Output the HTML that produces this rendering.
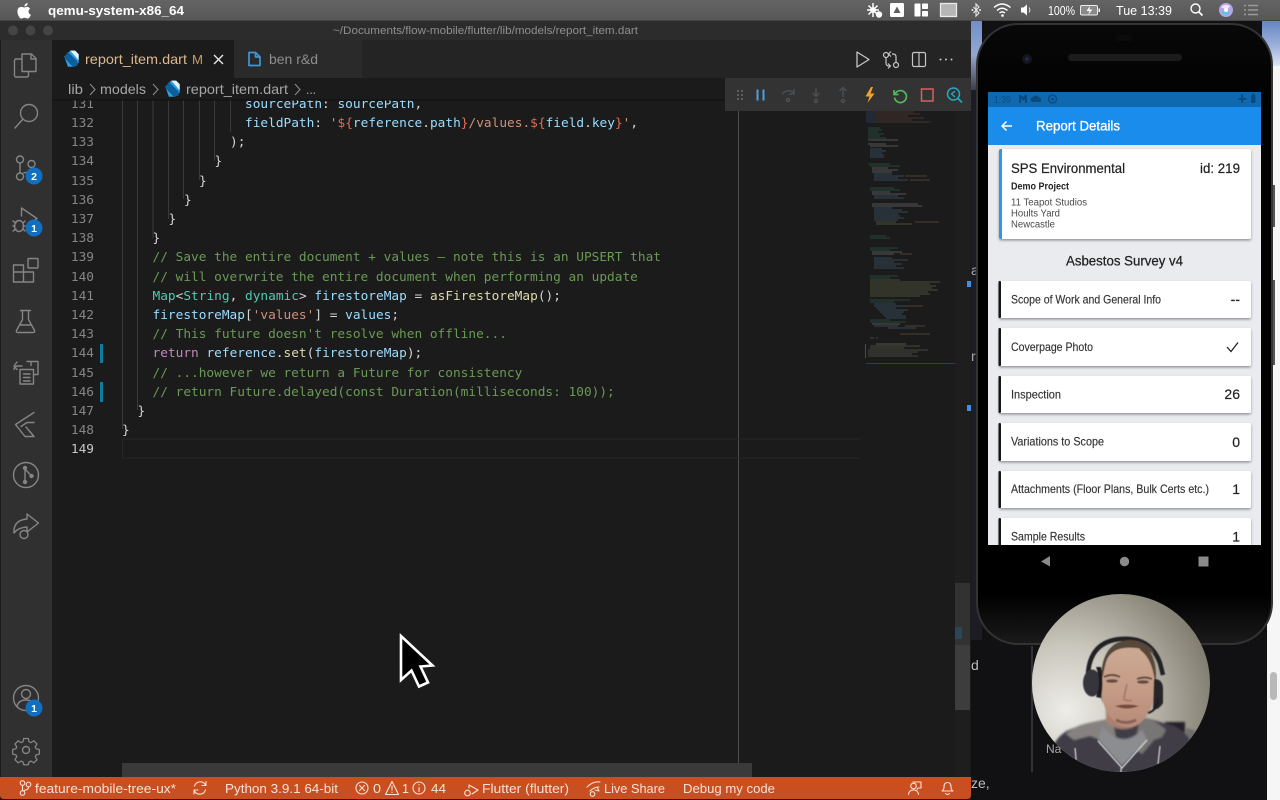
<!DOCTYPE html>
<html lang="en">
<head>
<meta charset="utf-8">
<title>report_item.dart</title>
<style>
html,body{margin:0;padding:0;width:1280px;height:800px;overflow:hidden;background:#111}
svg{display:block;filter:blur(.3px)}
text{font-family:"Liberation Sans",sans-serif;white-space:pre}
.c text,text.c{font-family:"DejaVu Sans Mono","Liberation Mono",monospace;font-size:12.8px}
.n{fill:#858585;text-anchor:end;font-family:"DejaVu Sans Mono","Liberation Mono",monospace;font-size:12.8px}
.p{fill:#d4d4d4}.v{fill:#9cdcfe}.f{fill:#dcdcaa}.s{fill:#ce9178}.t{fill:#4ec9b0}.k{fill:#c586c0}.g{fill:#6a9955}
.ic{fill:none;stroke:#858585;stroke-width:1.4;stroke-linecap:round;stroke-linejoin:round}
.st{fill:#f4e3da;font-size:13px}
.si{fill:none;stroke:#f4e3da;stroke-width:1.1;stroke-linejoin:round;stroke-linecap:round}
.it{fill:#333;font-size:11.6px;stroke:#333;stroke-width:.15}
.val{fill:#222;font-size:14px;text-anchor:end;stroke:#222;stroke-width:.2}
</style>
</head>
<body>
<svg width="1280" height="800" viewBox="0 0 1280 800" xmlns="http://www.w3.org/2000/svg">
<defs>
<linearGradient id="menu" x1="0" y1="0" x2="0" y2="1"><stop offset="0" stop-color="#646464"/><stop offset="1" stop-color="#565656"/></linearGradient>
<linearGradient id="bluel" x1="0" y1="0" x2="0" y2="1"><stop offset="0" stop-color="#6f8fc9"/><stop offset=".5" stop-color="#93a8d0"/><stop offset="1" stop-color="#3a3d4c"/></linearGradient>
<linearGradient id="bluer" x1="0" y1="0" x2="0" y2="1"><stop offset="0" stop-color="#6484c0"/><stop offset=".55" stop-color="#a0b5de"/><stop offset="1" stop-color="#eef1f8"/></linearGradient>
<linearGradient id="phone" x1="0" y1="0" x2="0" y2="1"><stop offset="0" stop-color="#080808"/><stop offset=".15" stop-color="#000"/><stop offset=".92" stop-color="#000"/><stop offset="1" stop-color="#1a1a1a"/></linearGradient>
<radialGradient id="wall" cx=".2" cy=".65" r=".9"><stop offset="0" stop-color="#eeede8"/><stop offset=".4" stop-color="#c9c6bc"/><stop offset="1" stop-color="#767164"/></radialGradient>
<linearGradient id="skin" x1="0" y1="0" x2="0" y2="1"><stop offset="0" stop-color="#cdaa94"/><stop offset=".6" stop-color="#c49a84"/><stop offset="1" stop-color="#b58a78"/></linearGradient>
<clipPath id="cam"><circle cx="1121" cy="683" r="89"/></clipPath>
<clipPath id="screen"><rect x="988" y="92" width="273" height="453"/></clipPath>
<clipPath id="ed"><rect x="52" y="100" width="810" height="677"/></clipPath>
<filter id="sh" x="-10%" y="-20%" width="120%" height="150%"><feDropShadow dx="0" dy="1.5" stdDeviation="1.4" flood-color="#000" flood-opacity=".38"/></filter>
<filter id="soft"><feGaussianBlur stdDeviation="1"/></filter>
<filter id="soft2"><feGaussianBlur stdDeviation=".6"/></filter>
<g id="dart" transform="scale(1.2)"><path d="M-6 -2 L-1 -7 L3 -7 L6 -4 L6 3 L2 6.500 L-3 6.500 Z" fill="#2f9fe0"/><path d="M-3 -6 L5 2 L5 5.500 L1 6.500 L-6 -1 Z" fill="#0d5f9c"/><path d="M-1 -7 L3 -7 L6 -4 L6 1 Z" fill="#e8f2fa"/></g>
</defs>

<!-- backdrop -->
<rect width="1280" height="800" fill="#111113"/>
<rect x="970" y="20" width="12" height="70" fill="url(#bluel)"/>
<rect x="970" y="90" width="12" height="550" fill="#1c1c24"/>
<rect x="1262" y="20" width="18" height="50" fill="url(#bluer)"/>
<rect x="1267" y="66" width="13" height="734" fill="#f6f6f6"/>
<rect x="1270" y="672" width="7" height="28" rx="3.500" fill="#b9b9b9"/>
<text x="971" y="275" fill="#a8a8a8" font-size="14">a</text>
<text x="971" y="361" fill="#a8a8a8" font-size="14">r</text>
<text x="971" y="670" fill="#bdbdbd" font-size="14">d</text>
<text x="971" y="788" fill="#bdbdbd" font-size="14">ze,</text>
<line x1="1032" y1="646" x2="1032" y2="772" stroke="#555" stroke-width="1"/>
<text x="1046" y="753" fill="#a9a9a9" font-size="12">Na</text>

<!-- VS Code window -->
<rect x="0" y="21" width="971" height="779" fill="#1b1b1c"/>
<rect x="0" y="21" width="971" height="19" fill="#2c2c2c"/>
<circle cx="13" cy="30.500" r="5" fill="#454545"/><circle cx="30.500" cy="30.500" r="5" fill="#454545"/><circle cx="48" cy="30.500" r="5" fill="#454545"/>
<text x="333" y="34" fill="#8f8f8f" font-size="11" textLength="305" lengthAdjust="spacingAndGlyphs">~/Documents/flow-mobile/flutter/lib/models/report_item.dart</text>

<!-- activity bar -->
<rect x="1" y="40" width="51" height="737" fill="#303030"/>
<!-- tabs -->
<rect x="52" y="40" width="919" height="38" fill="#242425"/>
<rect x="52" y="40" width="182" height="38" fill="#1b1b1c"/>
<rect x="234" y="40" width="128" height="38" fill="#2a2a2b"/>
<use href="#dart" x="71.500" y="59"/>
<text x="85" y="64" fill="#dcb98c" font-size="14" textLength="102" lengthAdjust="spacingAndGlyphs">report_item.dart</text>
<text x="192" y="64" fill="#c79c63" font-size="13" textLength="11" lengthAdjust="spacingAndGlyphs">M</text>
<path d="M214 55 L223 64 M223 55 L214 64" stroke="#e6e6e6" stroke-width="1.400" fill="none"/>
<path d="M249 52.500 h6.500 l4.500 4.500 v8.500 h-11 z M255.500 52.500 v4.500 h4.500" fill="none" stroke="#3f97d6" stroke-width="1.700" stroke-linejoin="round"/>
<text x="269" y="64" fill="#8e8e8e" font-size="14" textLength="49" lengthAdjust="spacingAndGlyphs">ben r&amp;d</text>
<path d="M857 52 L869 59.500 L857 67 Z" fill="none" stroke="#c5c5c5" stroke-width="1.300" stroke-linejoin="round"/>
<g fill="none" stroke="#c5c5c5" stroke-width="1.200" stroke-linejoin="round"><circle cx="886" cy="55" r="2.500"/><circle cx="896" cy="65" r="2.500"/><path d="M886 57.500 V63 q0 3 3 3 h1 M896 62.500 V57 q0 -3 -3 -3 h-1 M891 51.500 L888.500 54 L891 56.500 M888 63.500 L890.500 66 L888 68.500"/><rect x="912.500" y="52.500" width="13" height="14" rx="1.500"/><path d="M919 52.500 v14"/></g>
<g fill="#c5c5c5"><circle cx="940.500" cy="59.500" r="1"/><circle cx="946" cy="59.500" r="1"/><circle cx="951.500" cy="59.500" r="1"/></g>

<!-- code -->
<g clip-path="url(#ed)">
<g stroke="#3a3a3a" stroke-width="1">
<path d="M122.500 100V429M137.500 100V410M153 100V238M168.500 100V219M183.500 100V199M199.500 100V180M214.500 100V161M230.500 100V132"/>
</g>
<path d="M738.500 100V777" stroke="#4d4d4d"/>
<path d="M122.500 458 V439 H860 M122.500 458 H860" fill="none" stroke="#272727"/>
<g>
<text class="n" x="94" y="108">131</text><text class="n" x="94" y="127">132</text><text class="n" x="94" y="146">133</text><text class="n" x="94" y="165">134</text><text class="n" x="94" y="185">135</text><text class="n" x="94" y="204">136</text><text class="n" x="94" y="223">137</text><text class="n" x="94" y="242">138</text><text class="n" x="94" y="261">139</text><text class="n" x="94" y="281">140</text><text class="n" x="94" y="300">141</text><text class="n" x="94" y="319">142</text><text class="n" x="94" y="338">143</text><text class="n" x="94" y="357">144</text><text class="n" x="94" y="377">145</text><text class="n" x="94" y="396">146</text><text class="n" x="94" y="415">147</text><text class="n" x="94" y="434">148</text><text class="n" x="94" y="453" style="fill:#c8c8c8">149</text>
</g>
<rect x="100" y="344" width="3" height="19" fill="#0c7d9d"/>
<rect x="100" y="382" width="3" height="20" fill="#0c7d9d"/>
<g class="c">
<text x="245" y="108"><tspan class="v">sourcePath</tspan><tspan class="p">: </tspan><tspan class="v">sourcePath</tspan><tspan class="p">,</tspan></text>
<text x="245" y="127"><tspan class="v">fieldPath</tspan><tspan class="p">: </tspan><tspan class="s">'</tspan><tspan fill="#e06c55">${</tspan><tspan class="v">reference</tspan><tspan class="p">.</tspan><tspan class="v">path</tspan><tspan fill="#e06c55">}</tspan><tspan class="s">/values.</tspan><tspan fill="#e06c55">${</tspan><tspan class="v">field</tspan><tspan class="p">.</tspan><tspan class="v">key</tspan><tspan fill="#e06c55">}</tspan><tspan class="s">'</tspan><tspan class="p">,</tspan></text>
<text x="230" y="146" class="p">);</text>
<text x="214.500" y="165" class="p">}</text>
<text x="199" y="185" class="p">}</text>
<text x="184" y="204" class="p">}</text>
<text x="168.500" y="223" class="p">}</text>
<text x="152.500" y="242" class="p">}</text>
<text x="152.500" y="261" class="g">// Save the entire document + values – note this is an UPSERT that</text>
<text x="152.500" y="281" class="g">// will overwrite the entire document when performing an update</text>
<text x="152.500" y="300"><tspan class="t">Map</tspan><tspan class="p">&lt;</tspan><tspan class="t">String</tspan><tspan class="p">, </tspan><tspan class="t">dynamic</tspan><tspan class="p">&gt; </tspan><tspan class="v">firestoreMap</tspan><tspan class="p"> = </tspan><tspan class="f">asFirestoreMap</tspan><tspan class="p">();</tspan></text>
<text x="152.500" y="319"><tspan class="v">firestoreMap</tspan><tspan class="p">[</tspan><tspan class="s">'values'</tspan><tspan class="p">] = </tspan><tspan class="v">values</tspan><tspan class="p">;</tspan></text>
<text x="152.500" y="338" class="g">// This future doesn't resolve when offline...</text>
<text x="152.500" y="357"><tspan class="k">return</tspan><tspan class="p"> </tspan><tspan class="v">reference</tspan><tspan class="p">.</tspan><tspan class="f">set</tspan><tspan class="p">(</tspan><tspan class="v">firestoreMap</tspan><tspan class="p">);</tspan></text>
<text x="152.500" y="377" class="g">// ...however we return a Future for consistency</text>
<text x="152.500" y="396" class="g">// return Future.delayed(const Duration(milliseconds: 100));</text>
<text x="137.500" y="415" class="p">}</text>
<text x="122" y="434" class="p">}</text>
</g>
</g>

<!-- breadcrumb -->
<rect x="52" y="78" width="919" height="22" fill="#1b1b1c"/>
<rect x="52" y="99" width="919" height="2" fill="#111" opacity=".55"/>
<g fill="#a6a6a6" font-size="14">
<text x="68" y="94" textLength="15" lengthAdjust="spacingAndGlyphs">lib</text>
<text x="100" y="94" textLength="46" lengthAdjust="spacingAndGlyphs">models</text>
<text x="186" y="94" textLength="102" lengthAdjust="spacingAndGlyphs">report_item.dart</text>
<text x="306" y="94" textLength="10" lengthAdjust="spacingAndGlyphs">...</text>
</g>
<path d="M90 84 L95 89.500 L90 95 M153 84 L158 89.500 L153 95 M295 84 L300 89.500 L295 95" fill="none" stroke="#8a8a8a" stroke-width="1.100"/>
<use href="#dart" x="172.500" y="89"/>

<!-- minimap -->
<g fill="none" stroke-width=".8" opacity=".5">
<path stroke="#3d6f9c" d="M866 112h10M866 114h10M866 116h10M866 118h10M866 120h10M866 122h10"/>
<path stroke="#8a5a4a" d="M876 112h38M876 114h44M876 116h32M876 118h48M876 120h36M876 122h55"/>
<path stroke="#3f8f72" d="M868 128h12M868 130h14M868 132h10M868 134h16M868 136h12M868 138h18M868 164h22M870 166h30M870 188h24M870 190h30M870 236h16M870 238h20M870 248h28M870 250h20M870 276h28M870 278h20M870 300h40M870 302h24M870 320h20M870 322h36"/>
<path stroke="#b8b8b0" d="M868 140h30M868 144h18M870 146h28M872 168h16M872 170h26M872 172h20M872 192h18M872 194h34M872 204h46M872 206h50M872 252h30M872 254h22M872 324h28M876 344h30"/>
<path stroke="#5d8fb5" d="M870 149h12M870 151h16M870 153h12M870 155h14M870 157h14M874 174h18M874 176h30M874 178h24M874 180h34M874 196h24M874 198h30M874 208h18M874 210h28M874 212h34M874 214h24M874 216h26M874 218h30M874 220h24M874 258h18M874 260h34M874 262h20M874 264h28M874 266h22M874 268h30M874 304h22M874 306h32M874 326h24M876 308h20M878 310h30M880 312h24M882 314h20M884 316h22M886 318h20M888 328h28"/>
<path stroke="#95a06a" d="M876 222h20M876 224h36M870 280h30M870 282h70M870 284h60M870 286h66M870 288h62M870 290h68M870 292h58M870 294h60M870 296h50M870 346h50M870 348h34"/>
<path stroke="#a8755f" d="M905 176h22M910 180h20M915 222h24M900 254h12M905 306h18M905 326h20M900 334h30"/>
<path stroke="#8c8c7e" d="M870 338h4M876 338h2M868 350h60M868 352h50M868 354h44M868 356h50"/>
</g>
<rect x="866" y="363" width="89" height="1" fill="#2a4058"/>
<rect x="865" y="344" width="1" height="14" fill="#0c7d9d" opacity=".7"/>

<!-- overview ruler/scrollbars -->
<rect x="955" y="100" width="15" height="677" fill="#1e1e1f"/>
<rect x="955" y="583" width="15" height="62" fill="#323232"/>
<rect x="955" y="645" width="15" height="65" fill="#3d3d3d"/>
<rect x="955" y="627" width="7" height="12" fill="#2b4656"/>
<rect x="967" y="281" width="4" height="6" fill="#3f8ee8"/>
<rect x="967" y="405" width="4" height="6" fill="#3f8ee8"/>
<rect x="122" y="763" width="630" height="14" fill="#3a3a3a"/>

<!-- debug toolbar -->
<rect x="725" y="78" width="246" height="33" fill="#333"/>
<g fill="#6d6d6d"><circle cx="738" cy="91" r="1"/><circle cx="742" cy="91" r="1"/><circle cx="738" cy="95" r="1"/><circle cx="742" cy="95" r="1"/><circle cx="738" cy="99" r="1"/><circle cx="742" cy="99" r="1"/></g>
<path d="M757.500 89.500V100.500M763.500 89.500V100.500" stroke="#4f9fdf" stroke-width="2" fill="none"/>
<g fill="none" stroke="#4b4f53" stroke-width="1.500"><path d="M782 94 q6 -6 12 -1 M794 89 v5 h-5"/><circle cx="788" cy="100" r="1.500"/><path d="M816 88 v8 M812.500 93 l3.500 3.500 l3.500 -3.500"/><circle cx="816" cy="101" r="1.500"/><path d="M843 97 v-9 M839.500 91 l3.500 -3.500 l3.500 3.500"/><circle cx="843" cy="101" r="1.500"/></g>
<path d="M871 87 L865.500 96.500 L869.500 96.500 L867.500 103 L874.500 93.500 L870.500 93.500 L873 87 Z" fill="#f0a42a"/>
<path d="M894 90 V94.500 H898.500 M895 94 a6 6 0 1 1 -0.500 3.500" fill="none" stroke="#52b95a" stroke-width="1.700"/>
<rect x="921.500" y="89" width="11.500" height="12" fill="none" stroke="#d9605f" stroke-width="1.500"/>
<circle cx="953.500" cy="94" r="6" fill="none" stroke="#2aa6c4" stroke-width="1.500"/><path d="M958 98.500 L962 102.500" stroke="#2aa6c4" stroke-width="1.700"/><path d="M955 91 L951.500 94 L955 97" fill="none" stroke="#2aa6c4" stroke-width="1.300"/>

<!-- activity icons -->
<g class="ic">
<path d="M22 54 h9.500 l4.500 4.500 v13 h-14 z M31 54 v5 h5"/><path d="M21 59 h-5 a1.500 1.500 0 0 0 -1.500 1.500 v15 a1.500 1.500 0 0 0 1.500 1.500 h11 a1.500 1.500 0 0 0 1.500 -1.500 v-4"/>
<circle cx="29" cy="113" r="8.500"/><path d="M23 119 L15 128"/>
<circle cx="20" cy="159.500" r="3.500"/><circle cx="31.500" cy="164" r="3.500"/><circle cx="20" cy="176.500" r="3.500"/><path d="M20 163 V173 M31.500 167.500 q0 4 -4 4.500 l-4 1"/>
<path d="M21.500 208 L37 218.500 L27 225 M21.500 208 V216"/><ellipse cx="19" cy="226" rx="4.500" ry="5.500"/><path d="M13 221 l3 2 M13 226 h2 M13 231 l3 -2 M25 221 l-2 2 M25 226 h-2 M25 231 l-2 -2"/>
<path d="M14 265 h9.500 v17 h-10 v-17 M23.500 272 h-10 M23.500 272 h10 v10 h-10"/><rect x="28" y="258.500" width="10" height="9.500" rx=".8"/>
<path d="M20.500 310.500 h10 M22.500 310.500 v9 l-6 11 q-.8 2 1.500 2 h15 q2.300 0 1.500 -2 l-6 -11 v-9 M19.500 325 h12"/>
<path d="M22 366 h-4.500 a3.500 3.500 0 0 0 -3.500 3.500 M14 366 l3 -4 M14 366 l3 3.500 M27 361.500 h11 v13 h-4.500 M20 369.500 h13.500 v14.500 h-13.500 z M23.500 374 h6.500 M23.500 377.500 h6.500 M23.500 381 h6.500 M31 361.500 v4"/>
<path d="M34 412.500 L15.500 424.500 L25 436.500 H34 L26 427 M34 422.500 L27 422.500 L21 426.500"/>
<circle cx="26" cy="475" r="12.500"/><path d="M25 468.500 V482 M25 469 L31.500 476"/><circle cx="25" cy="468" r="1.500" fill="#858585"/><circle cx="25" cy="482" r="1.500" fill="#858585"/><circle cx="31.500" cy="476" r="1.500" fill="#858585"/>
<path d="M14 530 q1 -10 13 -11 v-5 l11.500 9 l-11.500 9 v-5 q-9 .5 -13 6 z"/><circle cx="24" cy="534.500" r="4"/>
<circle cx="26" cy="698" r="12.500"/><circle cx="26" cy="694" r="4.500"/><path d="M17 707 q1 -7 9 -7 q8 0 9 7"/>
<circle cx="26" cy="750" r="3.500"/><path d="M23.500 738.500 h5 l.8 3.500 l2 1 l3.200 -2 l3.500 3.500 l-2 3.200 l1 2 l3.500 .8 v5 l-3.500 .8 l-1 2 l2 3.200 l-3.500 3.500 l-3.200 -2 l-2 1 l-.8 3 h-5 l-.8 -3 l-2 -1 l-3.200 2 l-3.500 -3.500 l2 -3.200 l-1 -2 l-3.500 -.8 v-5 l3.500 -.8 l1 -2 l-2 -3.200 l3.500 -3.500 l3.200 2 l2 -1 z" transform="translate(26 750) scale(.92) translate(-26 -751)"/>
</g>
<g font-size="10.500" font-weight="bold" fill="#fff" text-anchor="middle">
<circle cx="34" cy="176" r="8.500" fill="#0f6fc0"/><text x="34" y="180">2</text>
<circle cx="34" cy="228" r="8.500" fill="#0f6fc0"/><text x="34" y="232">1</text>
<circle cx="34" cy="708" r="8.500" fill="#0f6fc0"/><text x="34" y="712">1</text>
</g>

<!-- status bar -->
<path d="M0 777 H971 V795 q0 4 -4 4 H4 q-4 0 -4 -4 Z" fill="#c94f20"/>
<g class="si">
<circle cx="22.500" cy="783" r="2.300"/><circle cx="22.500" cy="793" r="2.300"/><circle cx="28.500" cy="784.500" r="2.300"/><path d="M22.500 785.500 V790.500 M28.500 787 q0 2.500 -3 3 l-2 1"/>
<path d="M194.500 786 a6 6 0 0 1 11 -1 M205.500 790 a6 6 0 0 1 -11 1 M206 781.500 v4 h-4 M194 794 v-4 h4"/>
<circle cx="362" cy="788" r="6"/><path d="M359.500 785.500 L364.500 790.500 M364.500 785.500 L359.500 790.500"/>
<path d="M392 781.500 L398.500 794.500 H385.500 Z M392 786 v4 M392 792 v.5"/>
<circle cx="419" cy="788" r="6"/><path d="M419 787.500 v4 M419 784.500 v.5"/>
<path d="M469 785 L478 790 L472 794 M469 785 V788"/><circle cx="467.500" cy="793" r="2.800"/>
<path d="M587 787 q6 -6 13 -5 M590 791 q4 -4 9 -4"/><circle cx="592.500" cy="794" r="2.300"/><path d="M595 790 l4 1 l-2 -4"/>
<circle cx="913.500" cy="786" r="2.800"/><path d="M908.500 794.500 q.5 -4.500 5 -4.500 q4.500 0 5 4.500 M913 782 h8 v6 h-3 l-1 1.500"/>
<path d="M942 791 q2 -1 2 -4 q0 -4.500 3.500 -4.500 q3.500 0 3.500 4.500 q0 3 2 4 z M945.500 793.500 q2 2 4 0"/>
</g>
<text class="st" x="35" y="793" textLength="141" lengthAdjust="spacingAndGlyphs">feature-mobile-tree-ux*</text>
<text class="st" x="225" y="793" textLength="113" lengthAdjust="spacingAndGlyphs">Python 3.9.1 64-bit</text>
<text class="st" x="373" y="793" textLength="8" lengthAdjust="spacingAndGlyphs">0</text>
<text class="st" x="402" y="793" textLength="7" lengthAdjust="spacingAndGlyphs">1</text>
<text class="st" x="431" y="793" textLength="15" lengthAdjust="spacingAndGlyphs">44</text>
<text class="st" x="482" y="793" textLength="87" lengthAdjust="spacingAndGlyphs">Flutter (flutter)</text>
<text class="st" x="604" y="793" textLength="61" lengthAdjust="spacingAndGlyphs">Live Share</text>
<text class="st" x="683" y="793" textLength="92" lengthAdjust="spacingAndGlyphs">Debug my code</text>

<!-- menu bar -->
<rect width="1280" height="21" fill="url(#menu)"/>
<rect y="20" width="1280" height="1" fill="#454545"/>
<path d="M24.500 6.500 c1.500 -.2 3 -1 3.300 -3.500 c-2 .3 -3.500 1.600 -3.300 3.500 Z M19.500 7.500 c1.800 -1.300 3.600 0 4.800 0 c1.200 0 2.800 -1.300 4.700 0 c.5 .4 1 .9 1.200 1.300 c-2.600 1.600 -2 5 .7 6 c-.7 1.700 -1.800 3.800 -3.300 3.800 c-1.200 0 -1.600 -.8 -3.100 -.8 c-1.500 0 -1.900 .8 -3.100 .8 c-2.400 0 -5 -6.300 -3.500 -9.600 c.3 -.7 .9 -1.500 1.100 -1.500 Z" fill="#fff"/>
<text x="48" y="15" fill="#fff" font-size="13" font-weight="bold" textLength="136" lengthAdjust="spacingAndGlyphs">qemu-system-x86_64</text>
<g fill="#fff">
<g stroke="#fff" stroke-width="1.500"><path d="M873 3 V7 M873 13 V17 M867 10 H871 M875 10 H879 M868.500 5.500 L871 8 M875 12 L877.500 14.500 M877.500 5.500 L875 8 M871 12 L868.500 14.500"/></g><circle cx="873" cy="10" r="3"/><circle cx="879" cy="14.500" r="3.200"/>
<rect x="890" y="3" width="14" height="14" rx="1.500"/><path d="M897 6.500 L893.500 13 H900.500 Z" fill="#5e5e5e"/>
<rect x="914.500" y="3.500" width="6" height="13" rx=".8"/><rect x="922" y="3.500" width="6" height="5.500" rx=".8"/><rect x="922" y="11" width="6" height="5.500" rx=".8"/>
</g>
<rect x="940.500" y="3.500" width="16" height="13" fill="#b5b5b5" stroke="#eaeaea" stroke-width="1.300"/>
<g fill="none" stroke="#e8e8e8" stroke-width="1.100"><path d="M973.500 7 L979 13 L976 16 V4 L979 7 L973.500 13"/></g>
<circle cx="972.500" cy="10" r="1" fill="#e8e8e8"/><circle cx="980" cy="10" r="1" fill="#e8e8e8"/>
<g fill="none" stroke="#fff" stroke-width="1.400"><path d="M994 7.500 q8 -7 16.500 0 M997 10.500 q5 -4.500 10.500 0 M999.500 13 q2.700 -2.300 5.500 0"/></g>
<circle cx="1002.500" cy="15.500" r="1.300" fill="#fff"/>
<path d="M1021 7.500 h2.500 l3.500 -3 v11 l-3.500 -3 h-2.500 z" fill="#fff"/><path d="M1029 7.500 q1.700 2.500 0 5" fill="none" stroke="#ddd" stroke-width="1"/>
<text x="1048" y="15" fill="#fff" font-size="13" textLength="27" lengthAdjust="spacingAndGlyphs">100%</text>
<rect x="1080.500" y="5.500" width="17" height="9.500" rx="1.500" fill="#8a8a8a" stroke="#eee" stroke-width="1"/><rect x="1098.500" y="8.500" width="1.500" height="3.500" fill="#eee"/><path d="M1090 6 L1086.500 11 H1089.500 L1088 15 L1092.500 9.500 H1089.500 Z" fill="#fff"/>
<text x="1116" y="15" fill="#fff" font-size="13" textLength="56" lengthAdjust="spacingAndGlyphs">Tue 13:39</text>
<circle cx="1195.500" cy="8.500" r="4.500" fill="none" stroke="#fff" stroke-width="1.400"/><path d="M1199 12 L1202.500 15.500" stroke="#fff" stroke-width="1.700"/>
<circle cx="1226" cy="10" r="7" fill="#b9a5e6"/><path d="M1221 7 q5 -4 9 -1 q-2 5 -9 1 Z" fill="#f3e5f5"/><path d="M1221 12 q4 -3 9 1 q-4 4 -9 -1 Z" fill="#56c5e6"/><circle cx="1226" cy="10" r="2" fill="#fff"/>
<path d="M1244 5.500 h2 M1248 5.500 h10 M1244 10 h2 M1248 10 h10 M1244 14.500 h2 M1248 14.500 h10" stroke="#9a9a9a" stroke-width="1.400"/>

<!-- phone -->
<rect x="1272" y="185" width="3" height="42" fill="#555"/>
<rect x="1272" y="280" width="3" height="85" fill="#555"/>
<rect x="976" y="23" width="297" height="622" rx="42" fill="#333"/>
<rect x="978" y="25" width="293" height="618" rx="40" fill="url(#phone)"/>
<circle cx="1027" cy="59" r="5" fill="#15151d"/><circle cx="1027" cy="59" r="1.800" fill="#232a55"/>
<rect x="1068" y="54" width="114" height="7" rx="3.500" fill="#1c1c1c"/>
<rect x="1115" y="35" width="18" height="6" rx="3" fill="#0b0b0b"/>

<!-- android screen -->
<g clip-path="url(#screen)">
<rect x="988" y="92" width="273" height="453" fill="#e9ebee"/>
<rect x="988" y="92" width="273" height="15" fill="#0f69b0"/>
<rect x="988" y="107" width="273" height="38" fill="#1a8ceb"/>
<text x="994" y="103" fill="#0a4f86" font-size="10" textLength="17" lengthAdjust="spacingAndGlyphs">1:39</text>
<g fill="#0a4a7e"><path d="M1019 95 h2 l2 2 l2 -2 h2 v8 h-2 v-4 l-2 2 l-2 -2 v4 h-2 z"/><path d="M1033 102 a2.500 2.500 0 0 1 0 -5 a3.500 3.500 0 0 1 6 .5 a2.300 2.300 0 0 1 .5 4.500 z"/><circle cx="1052.500" cy="99" r="4" fill="none" stroke="#0a4a7e" stroke-width="1.300"/><circle cx="1052.500" cy="99" r="1.500"/><path d="M1241 94 h1.500 l1 4 h3 v1.500 l-3 .5 l-1 3 h-1.500 l.3 -3 l-3 -.5 v-1.500 l3 0 z"/><rect x="1251" y="95" width="4.500" height="8" rx="1"/><rect x="1252" y="93.500" width="2.500" height="2"/></g>
<path d="M1012 126 H1002 M1006.500 121.500 L1002 126 L1006.500 130.500" fill="none" stroke="#fff" stroke-width="1.500"/>
<text x="1036" y="130.500" fill="#fff" font-size="13.500" textLength="84" lengthAdjust="spacingAndGlyphs" stroke="#fff" stroke-width=".3">Report Details</text>

<g filter="url(#sh)"><rect x="999" y="149" width="252" height="90" rx="2" fill="#fff"/></g>
<path d="M1002 149 h-1 a2 2 0 0 0 -2 2 v86 a2 2 0 0 0 2 2 h1 z" fill="#2f97e8"/>
<text x="1011" y="173" fill="#222" stroke="#222" stroke-width=".2" font-size="14" textLength="114" lengthAdjust="spacingAndGlyphs">SPS Environmental</text>
<text x="1240" y="173" fill="#222" stroke="#222" stroke-width=".2" font-size="14" text-anchor="end" textLength="40" lengthAdjust="spacingAndGlyphs">id: 219</text>
<text x="1011" y="189.500" fill="#222" font-size="10" font-weight="bold" textLength="58" lengthAdjust="spacingAndGlyphs">Demo Project</text>
<text x="1011" y="205.500" fill="#4a4a4a" font-size="10" textLength="76" lengthAdjust="spacingAndGlyphs">11 Teapot Studios</text>
<text x="1011" y="216.500" fill="#4a4a4a" font-size="10" textLength="49" lengthAdjust="spacingAndGlyphs">Hoults Yard</text>
<text x="1011" y="227.500" fill="#4a4a4a" font-size="10" textLength="44" lengthAdjust="spacingAndGlyphs">Newcastle</text>
<text x="1066" y="265.500" fill="#222" stroke="#222" stroke-width=".25" font-size="13.500" textLength="117" lengthAdjust="spacingAndGlyphs">Asbestos Survey v4</text>

<g filter="url(#sh)" fill="#fff">
<rect x="999" y="281" width="252" height="37" rx="2"/>
<rect x="999" y="328" width="252" height="38" rx="2"/>
<rect x="999" y="376" width="252" height="37" rx="2"/>
<rect x="999" y="423" width="252" height="38" rx="2"/>
<rect x="999" y="471" width="252" height="37" rx="2"/>
<rect x="999" y="518" width="252" height="38" rx="2"/>
</g>
<g fill="#16161a">
<rect x="998.500" y="281" width="2.500" height="37" rx="1"/>
<rect x="998.500" y="328" width="2.500" height="38" rx="1"/>
<rect x="998.500" y="376" width="2.500" height="37" rx="1"/>
<rect x="998.500" y="423" width="2.500" height="38" rx="1"/>
<rect x="998.500" y="471" width="2.500" height="37" rx="1"/>
<rect x="998.500" y="518" width="2.500" height="38" rx="1"/>
</g>
<text class="it" x="1011" y="303.500" textLength="150" lengthAdjust="spacingAndGlyphs">Scope of Work and General Info</text>
<text class="it" x="1011" y="351" textLength="82" lengthAdjust="spacingAndGlyphs">Coverpage Photo</text>
<text class="it" x="1011" y="398.500" textLength="50" lengthAdjust="spacingAndGlyphs">Inspection</text>
<text class="it" x="1011" y="445.500" textLength="93" lengthAdjust="spacingAndGlyphs">Variations to Scope</text>
<text class="it" x="1011" y="493" textLength="198" lengthAdjust="spacingAndGlyphs">Attachments (Floor Plans, Bulk Certs etc.)</text>
<text class="it" x="1011" y="540.500" textLength="74" lengthAdjust="spacingAndGlyphs">Sample Results</text>
<text class="val" x="1240" y="304">--</text>
<path d="M1227 347 L1231 351.500 L1238 342.500" fill="none" stroke="#222" stroke-width="1.300"/>
<text class="val" x="1240" y="399">26</text>
<text class="val" x="1240" y="447">0</text>
<text class="val" x="1240" y="494">1</text>
<text class="val" x="1240" y="541.500">1</text>
</g>

<!-- nav buttons -->
<path d="M1050 556 V566.500 L1041 561.500 Z" fill="#8a8a8a"/>
<circle cx="1124.500" cy="561.500" r="4.700" fill="#8a8a8a"/>
<rect x="1198.500" y="556.500" width="10" height="10" fill="#8a8a8a"/>

<!-- webcam -->
<g clip-path="url(#cam)">
<rect x="1030" y="592" width="182" height="182" fill="url(#wall)"/>
<g filter="url(#soft)">
<path d="M1165 722 h20 v40 h-20 z" fill="#232325"/>
<path d="M1186 728 q12 2 18 10 l-18 30 z" fill="#6f6d6e"/>
<path d="M1054 744 q8 -14 24 -17 l34 -9 h34 l28 8 q12 6 16 14 v34 h-136 z" fill="#3f3d47"/>
<path d="M1066 734 q8 -8 22 -11 l24 -5 l6 30 l-6 6 l-14 -15 l-8 -3 l-16 4 z" fill="#85827f"/>
<path d="M1166 730 q-8 -8 -20 -12 l-6 0 l-6 30 l8 6 l12 -14 l8 -3 z" fill="#787674"/>
<path d="M1102 726 q20 24 40 4 l5 10 l-25 26 l-24 -26 z" fill="#8b8d91"/>
<path d="M1106 722 q16 14 36 0 v-22 h-36 z" fill="#ab8070"/>
</g>
<g filter="url(#soft2)">
<path d="M1075 748 q1 8 1 14 M1098 741 l24 27 l25 -28 M1121 768 v6 M1160 746 l-2 18" fill="none" stroke="#e6e6e6" stroke-width="1.100"/>
<path d="M1088 674 q2 -32 32 -35 q30 -3 40 24 l3 12" fill="none" stroke="#232327" stroke-width="4.500"/>
<ellipse cx="1128" cy="686" rx="27" ry="41" fill="url(#skin)"/>
<path d="M1140 650 q12 8 15 32 l1 -2 q1 -28 -15 -36 z" fill="#5a4639"/>
<path d="M1101 684 q-1 -30 14 -40 q16 -8 30 0 q8 4 9 10 q-14 -8 -30 -6 q-16 2 -19 18 z" fill="#57463a"/>
<path d="M1100 678 q-1 16 3 26 q-3 -20 -3 -26 z" fill="#7d6052"/>
<ellipse cx="1092" cy="683" rx="9" ry="13.500" fill="#34353a"/>
<path d="M1096 667 q6 15 0 30 l5 1 q3 -15 0 -31 z" fill="#1b1b1f"/>
<path d="M1154 679 q9 0 9 10 v14 q-3 6 -10 7 z" fill="#26262a"/>
<path d="M1158 698 q0 12 -10 15" fill="none" stroke="#1f1f23" stroke-width="2"/>
<path d="M1104 677 q8 -4 16 0 M1137 679 q8 -3 15 0" stroke="#5d463a" stroke-width="2" fill="none"/>
<ellipse cx="1112" cy="681" rx="6" ry="1.700" fill="#654a40"/>
<ellipse cx="1143" cy="682" rx="6" ry="1.700" fill="#654a40"/>
<path d="M1127 684 q-3 12 -3 15 q4 3 8 1" fill="none" stroke="#a97868" stroke-width="1.800"/>
<path d="M1115 706 q12 -3 24 0 q-12 5 -24 0 z" fill="#744a3e"/>
<path d="M1116 720 q10 5 20 0" fill="none" stroke="#8a6254" stroke-width="3"/>
</g>
</g>

<!-- mouse pointer -->
<path d="M401 636 V680 L411.500 670.500 L419 686.500 L428 682.500 L420.500 666.500 L432.500 665.500 Z" fill="#000" stroke="#fff" stroke-width="2.600" stroke-linejoin="miter"/>
</svg>
</body>
</html>
